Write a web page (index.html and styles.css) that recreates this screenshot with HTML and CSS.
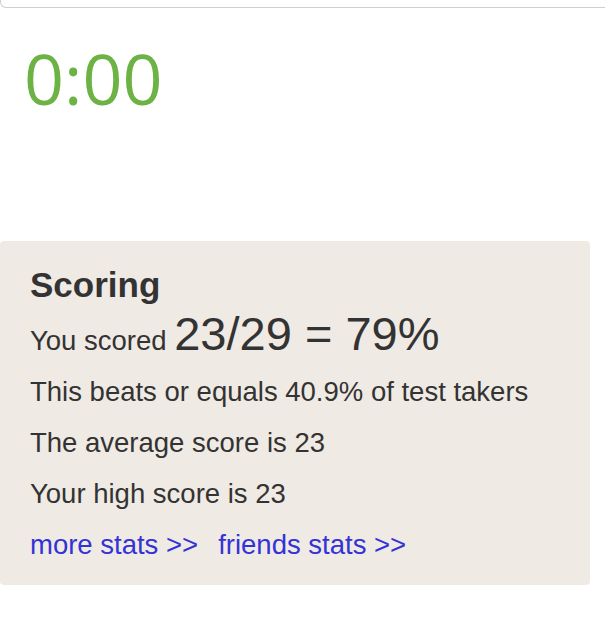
FILE: index.html
```html
<!DOCTYPE html>
<html>
<head>
<meta charset="utf-8">
<link rel="stylesheet" href="styles.css">
</head>
<body>
<div class="topbar"></div>
<div class="timer">0:00</div>
<div class="score-box">
  <h2 class="title">Scoring</h2>
  <p class="line first">You scored <span class="big">23/29 = 79%</span></p>
  <p class="line">This beats or equals 40.9% of test takers</p>
  <p class="line">The average score is 23</p>
  <p class="line">Your high score is 23</p>
  <p class="line links"><a href="#">more stats &gt;&gt;</a><a href="#">friends stats &gt;&gt;</a></p>
</div>
</body>
</html>
```
FILE: styles.css
```css
html, body { margin: 0; padding: 0; background: #fff; }
body { font-family: "Liberation Sans", Arial, sans-serif; color: #333; width: 605px; overflow: hidden; }
.topbar { height: 8px; width: 620px; border: 1px solid #cfcfcf; border-top: none; border-radius: 0 0 0 6px; box-sizing: border-box; }
.timer { font-family: "Open Sans", sans-serif; font-weight: 400; font-size: 70px; color: #6cb244; line-height: 70px; padding: 35px 0 0 24px; height: 233px; box-sizing: border-box; }
.score-box { width: 590px; background: #f0eae4; border-radius: 4px; padding: 24px 30px 15px; box-sizing: border-box; }
.title { margin: 0 0 3px; font-size: 35px; font-weight: bold; line-height: 40px; }
.line { margin: 0; font-size: 27.5px; line-height: 51px; }
.big { font-size: 47px; }
.links a { color: #3333d6; text-decoration: none; margin-right: 20px; }
```
